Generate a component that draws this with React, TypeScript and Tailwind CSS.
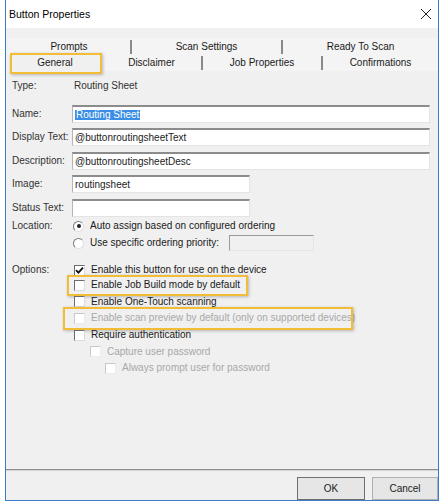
import React from "react"

const font = { fontFamily: '"Liberation Sans", Arial, sans-serif' }

function Check({ checked, disabled }: { checked?: boolean; disabled?: boolean }) {
  return (
    <div
      className={`flex h-[11px] w-[11px] shrink-0 items-center justify-center border bg-white ${
        disabled
          ? "border-t-[#c8c8c8] border-l-[#c8c8c8] border-r-[#ececec] border-b-[#ececec]"
          : "border-t-[#6d6d6d] border-l-[#6d6d6d] border-r-[#dcdcdc] border-b-[#dcdcdc]"
      }`}
    >
      {checked && (
        <svg width="9" height="9" viewBox="0 0 9 9">
          <path d="M1 4.2 L3.4 6.6 L8 1.6" fill="none" stroke="#111" strokeWidth="1.8" />
        </svg>
      )}
    </div>
  )
}

function Radio({ checked }: { checked?: boolean }) {
  return (
    <div className="flex h-[11px] w-[11px] shrink-0 items-center justify-center rounded-full border border-t-[#7a7a7a] border-l-[#7a7a7a] border-r-[#e0e0e0] border-b-[#e0e0e0] bg-white">
      {checked && <div className="h-[4px] w-[4px] rounded-full bg-[#222]" />}
    </div>
  )
}

function Field({ value, w, children }: { value?: string; w: string; children?: React.ReactNode }) {
  return (
    <div
      className={`flex h-[18px] items-center border border-t-2 border-t-[#8c8c8c] border-l-[#b4b4b4] border-r-[#e4e4e4] border-b-[#e4e4e4] bg-white px-[2px] ${w}`}
    >
      {children ?? <span className="text-[#222]">{value}</span>}
    </div>
  )
}

function OptRow({
  indent,
  label,
  checked,
  disabled,
  highlight,
}: {
  indent: string
  label: string
  checked?: boolean
  disabled?: boolean
  highlight?: string
}) {
  return (
    <div className={`relative flex h-[16.6px] items-center gap-[6px] ${indent}`}>
      <Check checked={checked} disabled={disabled} />
      <span className={disabled ? "text-[#a8a8a8]" : "text-[#1a1a1a]"}>{label}</span>
      {highlight && (
        <div className={`pointer-events-none absolute border-2 border-[#f2bc36] shadow-[1px_1px_3px_rgba(0,0,0,0.25)] ${highlight}`} />
      )}
    </div>
  )
}

export default function App() {
  return (
    <div className="h-[503px] w-[442px] bg-white text-[10px] leading-none" style={font}>
      <div className="ml-[5px] flex h-[501px] w-[434px] flex-col border-x border-b border-[#3b7dc4] bg-[#f0f0f0]">
        {/* title bar */}
        <div className="flex h-[28px] shrink-0 items-center justify-between bg-white pl-[3px] pr-[6px]">
          <span className="text-[10.5px] text-black">Button Properties</span>
          <svg width="12" height="12" viewBox="0 0 12 12">
            <path d="M1 1 L11 11 M11 1 L1 11" stroke="#222" strokeWidth="1" />
          </svg>
        </div>

        {/* tabs */}
        <div className="mt-[10px] ml-[2px] flex flex-col text-[#1a1a1a]">
          <div className="flex h-[17px] items-center bg-[#f4f4f4]">
            <div className="flex h-full w-[122px] items-center justify-center">Prompts</div>
            <div className="h-[14px] w-[2px] bg-[#8a8a8a]" />
            <div className="flex h-full w-[149px] items-center justify-center">Scan Settings</div>
            <div className="h-[14px] w-[2px] bg-[#8a8a8a]" />
            <div className="flex h-full flex-1 items-center justify-center">Ready To Scan</div>
          </div>
          <div className="flex h-[16px] items-center bg-[#f4f4f4]">
            <div className="relative flex h-full w-[94px] items-center justify-center bg-[#f0f0f0]">
              General
              <div className="pointer-events-none absolute -top-[2px] -bottom-[3px] left-[2px] right-0 border-2 border-[#f2bc36] shadow-[1px_1px_3px_rgba(0,0,0,0.25)]" />
            </div>
            <div className="flex h-full w-[99px] items-center justify-center">Disclaimer</div>
            <div className="h-[14px] w-[2px] bg-[#8a8a8a]" />
            <div className="flex h-full w-[118px] items-center justify-center">Job Properties</div>
            <div className="h-[14px] w-[2px] bg-[#8a8a8a]" />
            <div className="flex h-full flex-1 items-center justify-center">Confirmations</div>
          </div>
        </div>

        {/* panel */}
        <div className="flex flex-1 flex-col pl-[6px] text-[#1a1a1a]">
          <div className="mt-[8px] flex h-[14px] items-center">
            <span className="w-[62px] text-[#333]">Type:</span>
            <span className="text-[#333]">Routing Sheet</span>
          </div>

          <div className="mt-[12px] flex items-center">
            <span className="w-[60px] text-[#333]">Name:</span>
            <Field w="w-[358px]">
              <span className="bg-[#3a8ee6] px-[1px] text-white">Routing Sheet</span>
            </Field>
          </div>
          <div className="mt-[5px] flex items-center">
            <span className="w-[60px] text-[#333]">Display Text:</span>
            <Field w="w-[358px]" value="@buttonroutingsheetText" />
          </div>
          <div className="mt-[6px] flex items-center">
            <span className="w-[60px] text-[#333]">Description:</span>
            <Field w="w-[358px]" value="@buttonroutingsheetDesc" />
          </div>
          <div className="mt-[5px] flex items-center">
            <span className="w-[60px] text-[#333]">Image:</span>
            <Field w="w-[178px]" value="routingsheet" />
          </div>
          <div className="mt-[6px] flex items-center">
            <span className="w-[60px] text-[#333]">Status Text:</span>
            <Field w="w-[178px]" />
          </div>

          <div className="mt-[2px] flex h-[14px] items-center">
            <span className="w-[61px] text-[#333]">Location:</span>
            <Radio checked />
            <span className="ml-[6px]">Auto assign based on configured ordering</span>
          </div>
          <div className="mt-[2px] flex h-[16px] items-center">
            <span className="w-[61px]" />
            <Radio />
            <span className="ml-[6px]">Use specific ordering priority:</span>
            <div className="ml-[10px] h-[16px] w-[85px] border border-t-[#9a9a9a] border-l-[#9a9a9a] border-r-[#e4e4e4] border-b-[#e4e4e4] bg-[#f0f0f0]" />
          </div>

          <div className="mt-[12px] flex h-[14px] items-center">
            <span className="w-[62px] text-[#333]">Options:</span>
            <Check checked />
            <span className="ml-[6px]">Enable this button for use on the device</span>
          </div>
          <OptRow indent="ml-[62px]" label="Enable Job Build mode by default" highlight="-left-[7px] -top-[2px] -bottom-[2px] w-[181px]" />
          <OptRow indent="ml-[62px]" label="Enable One-Touch scanning" />
          <OptRow
            indent="ml-[62px]"
            label="Enable scan preview by default (only on supported devices)"
            disabled
            highlight="-left-[11px] -top-[3px] -bottom-[3px] w-[290px]"
          />
          <OptRow indent="ml-[62px]" label="Require authentication" />
          <OptRow indent="ml-[78px]" label="Capture user password" disabled />
          <OptRow indent="ml-[93px]" label="Always prompt user for password" disabled />
        </div>

        {/* footer */}
        <div className="h-[2px] shrink-0 border-t border-[#8f8f8f] border-b border-b-[#d4d4d4]" />
        <div className="flex h-[29px] shrink-0 items-end justify-end gap-[7px]">
          <button className="h-[23px] w-[68px] border border-[#6e6e6e] bg-[#e6e6e6] text-[10px] text-[#1a1a1a]" style={font}>
            OK
          </button>
          <button className="h-[23px] w-[66px] border border-[#b0b0b0] bg-[#e6e6e6] text-[10px] text-[#1a1a1a]" style={font}>
            Cancel
          </button>
        </div>
      </div>
    </div>
  )
}
